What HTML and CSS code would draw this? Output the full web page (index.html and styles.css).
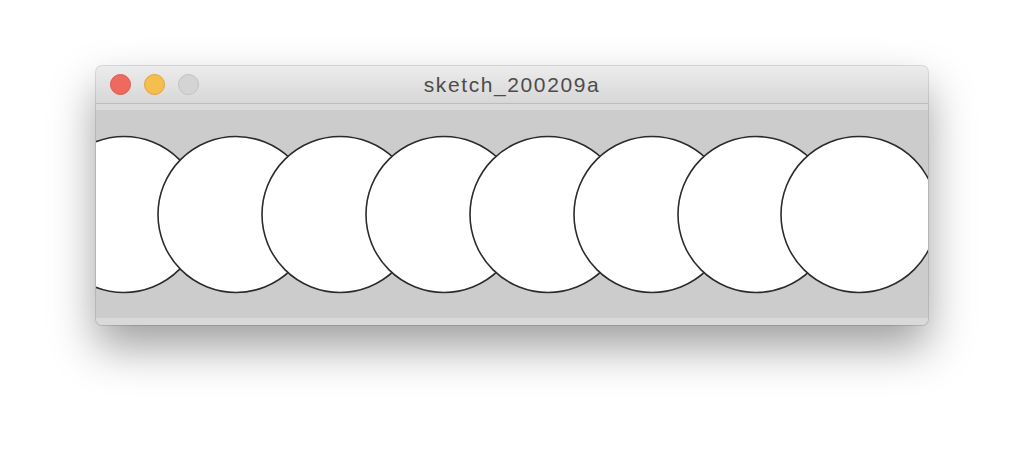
FILE: index.html
```html
<!DOCTYPE html>
<html lang="en">
<head>
    <meta charset="UTF-8">
    <title>sketch_200209a</title>
    <link rel="stylesheet" href="styles.css">
</head>
<body>
    <div class="window">
        <header class="titlebar">
            <div class="lights">
                <span class="light red"></span>
                <span class="light yellow"></span>
                <span class="light grey"></span>
            </div>
            <h1>sketch_200209a</h1>
        </header>
        <div class="band"></div>
        <svg class="canvas" width="832" height="208" viewBox="0 0 832 208">
            <g fill="#fff" stroke="#2b2b2b" stroke-width="1.6">
                <circle cx="28" cy="104.5" r="78"/>
                <circle cx="140" cy="104.5" r="78"/>
                <circle cx="244" cy="104.5" r="78"/>
                <circle cx="348" cy="104.5" r="78"/>
                <circle cx="452" cy="104.5" r="78"/>
                <circle cx="556" cy="104.5" r="78"/>
                <circle cx="660" cy="104.5" r="78"/>
                <circle cx="763" cy="104.5" r="78"/>
            </g>
        </svg>
        <div class="band bottom"></div>
    </div>
</body>
</html>
```

FILE: styles.css
```css
body{
    margin: 0;
    width: 1024px;
    height: 453px;
    background-color: #fff;
    padding: 66px 0 0 96px;
    box-sizing: border-box;
    overflow: hidden;
}

.window{
    width: 832px;
    border-radius: 6px;
    overflow: hidden;
    background-color: #ccc;
    box-shadow: 0 0 0 1px rgba(0,0,0,0.12), 0 22px 45px rgba(0,0,0,0.38);
}

.titlebar{
    height: 37px;
    display: flex;
    align-items: center;
    background: linear-gradient(#ececec, #d7d7d7);
    border-bottom: 1px solid #bdbdbd;
}

.lights{
    display: flex;
    gap: 13px;
    padding-left: 14px;
}

.light{
    width: 21px;
    height: 21px;
    border-radius: 50%;
    box-sizing: border-box;
}

.red{
    background: #ee6a5f;
    border: 1px solid #d9574d;
}

.yellow{
    background: #f5be4f;
    border: 1px solid #dea23a;
}

.grey{
    background: #d4d4d4;
    border: 1px solid #c1c1c1;
}

h1{
    margin: 0;
    flex: 1;
    text-align: center;
    margin-left: -103px;
    font-family: "Liberation Sans", Arial, sans-serif;
    font-weight: normal;
    font-size: 21px;
    letter-spacing: 1.6px;
    color: #4c4c4c;
    padding-top: 1px;
}

.band{
    height: 6px;
    background-color: #dadada;
}

.band.bottom{
    height: 7px;
    background-color: #d9d9d9;
}

.canvas{
    display: block;
}
```
